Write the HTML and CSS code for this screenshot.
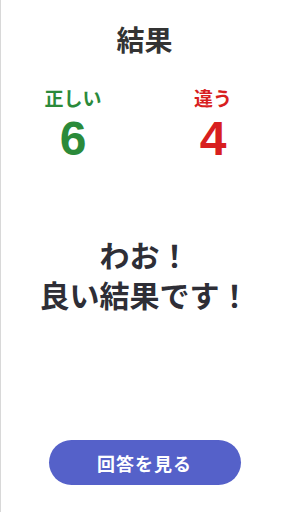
FILE: index.html
```html
<!DOCTYPE html>
<html lang="ja">
<head>
    <meta charset="UTF-8">
    <title>結果</title>
    <link rel="stylesheet" href="styles.css">
</head>
<body>
    <div class="pagina">
        <h1 class="titulo">結果</h1>

        <!-- placar -->
        <div class="placar">
            <div class="coluna">
                <div class="rotulo verde">正しい</div>
                <div class="numero verde">6</div>
            </div>
            <div class="coluna">
                <div class="rotulo vermelho">違う</div>
                <div class="numero vermelho">4</div>
            </div>
        </div>

        <p class="mensagem">わお！<br>良い結果です！</p>

        <button class="btn-respostas">回答を見る</button>
    </div>
</body>
</html>
```

FILE: styles.css
```css
body {
    margin: 0;
    font-family: "Noto Sans CJK JP", "Noto Sans", sans-serif;
    background-color: #fff;
}

.pagina {
    height: 512px;
    box-sizing: border-box;
    border-left: 1px solid #d8d8d8;
    display: flex;
    flex-direction: column;
    align-items: center;
}

.titulo {
    margin: 22px 0 0;
    font-size: 28px;
    line-height: 34px;
    font-weight: bold;
    color: #333;
}

/* Placar de acertos e erros */
.placar {
    align-self: stretch;
    display: grid;
    grid-template-columns: 140px 140px;
    padding-left: 2px;
    margin-top: 30px;
}

.coluna {
    display: flex;
    flex-direction: column;
    align-items: center;
}

.rotulo {
    font-size: 19px;
    line-height: 24px;
    font-weight: bold;
}

.numero {
    font-family: "Liberation Sans", Arial, sans-serif;
    font-size: 48px;
    line-height: 50px;
    font-weight: bold;
    margin-top: 4px;
}

.verde {
    color: #2b8a3a;
}

.vermelho {
    color: #d81f1f;
}

.mensagem {
    margin: 70px 0 0;
    font-size: 30px;
    line-height: 40px;
    font-weight: bold;
    text-align: center;
    color: #2e2e36;
}

.btn-respostas {
    margin-top: auto;
    margin-bottom: 27px;
    width: 192px;
    height: 45px;
    border: none;
    border-radius: 23px;
    background-color: #5561c9;
    color: #fff;
    font-family: "Noto Sans CJK JP", sans-serif;
    font-size: 18px;
    letter-spacing: 1px;
    font-weight: bold;
    cursor: pointer;
}
```
